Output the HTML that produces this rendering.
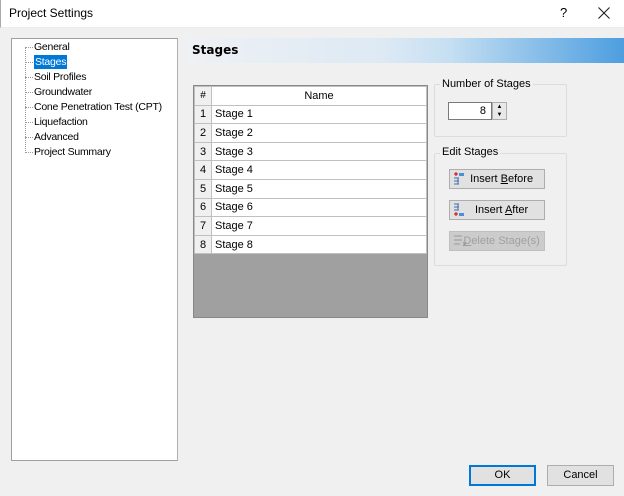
<!DOCTYPE html>
<html><head><style>
*{box-sizing:border-box;margin:0;padding:0}
body{width:624px;height:496px;background:#f0f0f0;font-family:"Liberation Sans",sans-serif;font-size:11px;color:#000;position:relative;overflow:hidden}
.a{position:absolute}
.tb{left:0;top:0;width:624px;height:28px;background:#fff;border-left:1px solid #aaa;border-bottom:1px solid #ececec}
.tree{left:11px;top:38px;width:167px;height:423px;background:#fff;border:1px solid #a0a0a0;border-right-color:#b0b0b0}
.ti{position:absolute;left:22px;height:14px;line-height:14px;font-size:10.5px;letter-spacing:-0.25px}
.dl{position:absolute;border-top:1px dotted #999;width:8px;left:13px}
.hdr{left:187px;top:38px;width:437px;height:25px;background:linear-gradient(to right,#eef1f5 0%,#dde9f4 45%,#c5dff2 60%,#4d9ee0 100%)}
table{border-collapse:collapse;position:absolute;left:194px;top:86px;width:233px}
td{border:1px solid #c0c0c0;height:18.6px;padding:0 3px;font-size:11px;background:#fff}
td.n{background:#f0f0f0;width:17px;text-align:center;padding:0}
.grid{left:193px;top:85px;width:235px;height:233px;background:#a0a0a0;border:1px solid #888}
.grp{border:1px solid #dcdcdc;border-radius:2px}
.btn{background:#e1e1e1;border:1px solid #adadad;height:20px;text-align:center;line-height:18px}
</style></head><body>
<div class="a tb"></div>
<div class="a" style="left:9px;top:6px;font-size:12px">Project Settings</div>
<div class="a" style="left:560px;top:5px;font-size:13px">?</div>
<svg class="a" style="left:598px;top:7px" width="12" height="12"><path d="M0.5 0.5L11.5 11.5M11.5 0.5L0.5 11.5" stroke="#222" stroke-width="1.1"/></svg>

<div class="a tree">
<div style="position:absolute;left:13px;top:8px;height:106px;border-left:1px dotted #999"></div>
<div class="dl" style="top:8px"></div><div class="ti" style="top:1px">General</div>
<div class="dl" style="top:23px"></div><div class="ti" style="top:16px;background:#0078d7;color:#fff;padding:0 1px">Stages</div>
<div class="dl" style="top:38px"></div><div class="ti" style="top:31px">Soil Profiles</div>
<div class="dl" style="top:53px"></div><div class="ti" style="top:46px">Groundwater</div>
<div class="dl" style="top:68px"></div><div class="ti" style="top:61px">Cone Penetration Test (CPT)</div>
<div class="dl" style="top:83px"></div><div class="ti" style="top:76px">Liquefaction</div>
<div class="dl" style="top:98px"></div><div class="ti" style="top:91px">Advanced</div>
<div class="dl" style="top:113px"></div><div class="ti" style="top:106px">Project Summary</div>
</div>

<div class="a hdr"></div>
<div class="a" style="left:192px;top:43px;font-weight:bold;font-size:12px;font-family:'DejaVu Sans',sans-serif">Stages</div>

<div class="a grid"></div>
<table>
<tr><td class="n" style="font-size:10px">#</td><td style="text-align:center">Name</td></tr>
<tr><td class="n">1</td><td>Stage 1</td></tr>
<tr><td class="n">2</td><td>Stage 2</td></tr>
<tr><td class="n">3</td><td>Stage 3</td></tr>
<tr><td class="n">4</td><td>Stage 4</td></tr>
<tr><td class="n">5</td><td>Stage 5</td></tr>
<tr><td class="n">6</td><td>Stage 6</td></tr>
<tr><td class="n">7</td><td>Stage 7</td></tr>
<tr><td class="n">8</td><td>Stage 8</td></tr>
</table>

<div class="a grp" style="left:434px;top:84px;width:133px;height:53px"></div>
<div class="a" style="left:440px;top:78px;background:#f0f0f0;padding:0 2px">Number of Stages</div>
<div class="a" style="left:448px;top:102px;width:44px;height:18px;background:#fff;border:1px solid #7a7a7a;text-align:right;padding-right:5px;line-height:16px">8</div>
<div class="a" style="left:492px;top:102px;width:15px;height:18px;border:1px solid #adadad;background:#e8e8e8;font-size:6px;line-height:8px;text-align:center">▲<br>▼</div>

<div class="a grp" style="left:434px;top:153px;width:133px;height:113px"></div>
<div class="a" style="left:440px;top:146px;background:#f0f0f0;padding:0 2px">Edit Stages</div>
<div class="a btn" style="left:449px;top:169px;width:96px">&nbsp;&nbsp;&nbsp;Insert <u>B</u>efore</div>
<div class="a btn" style="left:449px;top:200px;width:96px">&nbsp;&nbsp;&nbsp;Insert <u>A</u>fter</div>
<div class="a btn" style="left:449px;top:231px;width:96px;background:#cccccc;border-color:#bfbfbf;color:#a0a0a0">&nbsp;&nbsp;&nbsp;<u>D</u>elete Stage(s)</div>
<svg class="a" style="left:453px;top:172px" width="12" height="14"><path d="M1 2h4M3 0v4" stroke="#c00" fill="none"/><rect x="6" y="1" width="5" height="3" fill="#4a8fd8"/><path d="M1 6h5M1 9h5M1 12h5M5 6v6" stroke="#4070b0" fill="none"/></svg>
<svg class="a" style="left:453px;top:203px" width="12" height="14"><path d="M1 1h5M1 4h5M1 7h5M5 1v6" stroke="#4070b0" fill="none"/><path d="M1 11h4M3 9v4" stroke="#c00" fill="none"/><rect x="6" y="10" width="5" height="3" fill="#4a8fd8"/></svg>
<svg class="a" style="left:453px;top:234px" width="14" height="14"><path d="M1 2h8M1 6h8M1 10h6M10 8l3 4M13 8l-3 4" stroke="#999" fill="none"/></svg>

<div class="a" style="left:469px;top:465px;width:67px;height:21px;border:2px solid #0078d7;background:#e1e1e1;text-align:center;line-height:17px">OK</div>
<div class="a" style="left:547px;top:465px;width:67px;height:21px;border:1px solid #adadad;background:#e1e1e1;text-align:center;line-height:19px">Cancel</div>
</body></html>
